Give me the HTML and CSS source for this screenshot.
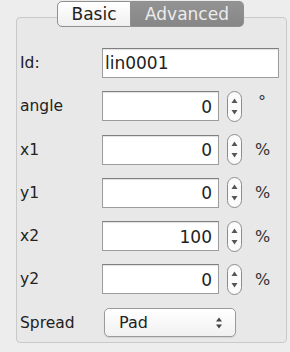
FILE: index.html
```html
<!DOCTYPE html>
<html>
  <head>
    <title>Gradient properties</title>
    <link rel="stylesheet" href="styles.css">
  </head>
  <body>
    <div class="tabs">
      <span class="tab tab-on">Basic</span>
      <span class="tab tab-off">Advanced</span>
    </div>
    <div class="panel">
      <div class="row">
        <label>Id:</label>
        <input class="field field-wide" type="text" value="lin0001">
      </div>
      <div class="row">
        <label>angle</label>
        <input class="field num" type="text" value="0">
        <span class="stepper">
          <svg width="15" height="31" viewBox="0 0 15 31">
            <rect x="0.5" y="0.5" width="14" height="30" rx="7" fill="#fbfbfb" stroke="#8c8c8c"/>
            <path d="M4.5 12 L7.5 7.5 L10.5 12 Z" fill="#555"/>
            <path d="M4.5 19 L7.5 23.5 L10.5 19 Z" fill="#555"/>
          </svg>
        </span>
        <span class="unit deg">&deg;</span>
      </div>
      <div class="row">
        <label>x1</label>
        <input class="field num" type="text" value="0">
        <span class="stepper">
          <svg width="15" height="31" viewBox="0 0 15 31">
            <rect x="0.5" y="0.5" width="14" height="30" rx="7" fill="#fbfbfb" stroke="#8c8c8c"/>
            <path d="M4.5 12 L7.5 7.5 L10.5 12 Z" fill="#555"/>
            <path d="M4.5 19 L7.5 23.5 L10.5 19 Z" fill="#555"/>
          </svg>
        </span>
        <span class="unit">%</span>
      </div>
      <div class="row">
        <label>y1</label>
        <input class="field num" type="text" value="0">
        <span class="stepper">
          <svg width="15" height="31" viewBox="0 0 15 31">
            <rect x="0.5" y="0.5" width="14" height="30" rx="7" fill="#fbfbfb" stroke="#8c8c8c"/>
            <path d="M4.5 12 L7.5 7.5 L10.5 12 Z" fill="#555"/>
            <path d="M4.5 19 L7.5 23.5 L10.5 19 Z" fill="#555"/>
          </svg>
        </span>
        <span class="unit">%</span>
      </div>
      <div class="row">
        <label>x2</label>
        <input class="field num" type="text" value="100">
        <span class="stepper">
          <svg width="15" height="31" viewBox="0 0 15 31">
            <rect x="0.5" y="0.5" width="14" height="30" rx="7" fill="#fbfbfb" stroke="#8c8c8c"/>
            <path d="M4.5 12 L7.5 7.5 L10.5 12 Z" fill="#555"/>
            <path d="M4.5 19 L7.5 23.5 L10.5 19 Z" fill="#555"/>
          </svg>
        </span>
        <span class="unit">%</span>
      </div>
      <div class="row">
        <label>y2</label>
        <input class="field num" type="text" value="0">
        <span class="stepper">
          <svg width="15" height="31" viewBox="0 0 15 31">
            <rect x="0.5" y="0.5" width="14" height="30" rx="7" fill="#fbfbfb" stroke="#8c8c8c"/>
            <path d="M4.5 12 L7.5 7.5 L10.5 12 Z" fill="#555"/>
            <path d="M4.5 19 L7.5 23.5 L10.5 19 Z" fill="#555"/>
          </svg>
        </span>
        <span class="unit">%</span>
      </div>
      <div class="row">
        <label>Spread</label>
        <div class="select">
          <span>Pad</span>
          <svg width="8" height="14" viewBox="0 0 8 14">
            <path d="M1 5.5 L4 1.5 L7 5.5 Z" fill="#444"/>
            <path d="M1 8.5 L4 12.5 L7 8.5 Z" fill="#444"/>
          </svg>
        </div>
      </div>
    </div>
  </body>
</html>
```

FILE: styles.css
```css
body {
  margin: 0;
  padding: 0;
  background-color: #ededed;
  font-family: "DejaVu Sans", "Liberation Sans", sans-serif;
  color: #222;
}
.tabs {
  display: flex;
  margin: 1px 0 0 57px;
  position: relative;
  z-index: 1;
}
.tab {
  height: 24px;
  line-height: 24px;
  font-size: 17px;
  text-align: center;
  border: 1px solid #8f8f8f;
}
.tab-on {
  width: 72px;
  background: linear-gradient(#ffffff, #f0f0f0);
  border-radius: 5px 0 0 5px;
  color: #222;
}
.tab-off {
  width: 112px;
  border-left: none;
  background: linear-gradient(#939393, #878787);
  border-radius: 0 5px 5px 0;
  color: #ececec;
}
.panel {
  margin: -10px 0 0 16px;
  width: 269px;
  height: 294px;
  padding: 30px 0 0 3px;
  box-sizing: content-box;
  border: 1px solid #c9c9c9;
  border-radius: 4px;
  background-color: #e8e8e8;
  display: flex;
  flex-direction: column;
  gap: 13.3px;
}
.panel {
  width: 266px;
}
.row {
  display: flex;
  align-items: center;
  height: 30px;
}
.row label {
  width: 82px;
  font-size: 15.5px;
}
.field {
  box-sizing: border-box;
  height: 30px;
  margin: 0;
  border: 1px solid #9d9d9d;
  border-top-color: #7f7f7f;
  box-shadow: inset 0 1px 1px rgba(0, 0, 0, 0.12);
  background: #fff;
  font-family: "DejaVu Sans", "Liberation Sans", sans-serif;
  font-size: 17px;
  color: #222;
  outline: none;
}
.field-wide {
  width: 177px;
  padding: 0 0 0 2px;
}
.num {
  width: 117px;
  text-align: right;
  padding: 1px 6px 0 0;
}
.stepper {
  display: flex;
  margin-left: 8px;
}
.unit {
  margin-left: 13px;
  font-size: 16px;
  color: #333;
}
.deg {
  align-self: flex-start;
  margin-top: 1px;
  margin-left: 16px;
}
.select {
  box-sizing: border-box;
  width: 132px;
  height: 29px;
  margin-left: 2px;
  padding: 0 12px 0 14px;
  display: flex;
  align-items: center;
  justify-content: space-between;
  border: 1px solid #9a9a9a;
  border-radius: 5px;
  background: linear-gradient(#ffffff, #f1f1f1);
  box-shadow: 0 1px 1px rgba(0, 0, 0, 0.1);
  font-size: 16px;
}
```
